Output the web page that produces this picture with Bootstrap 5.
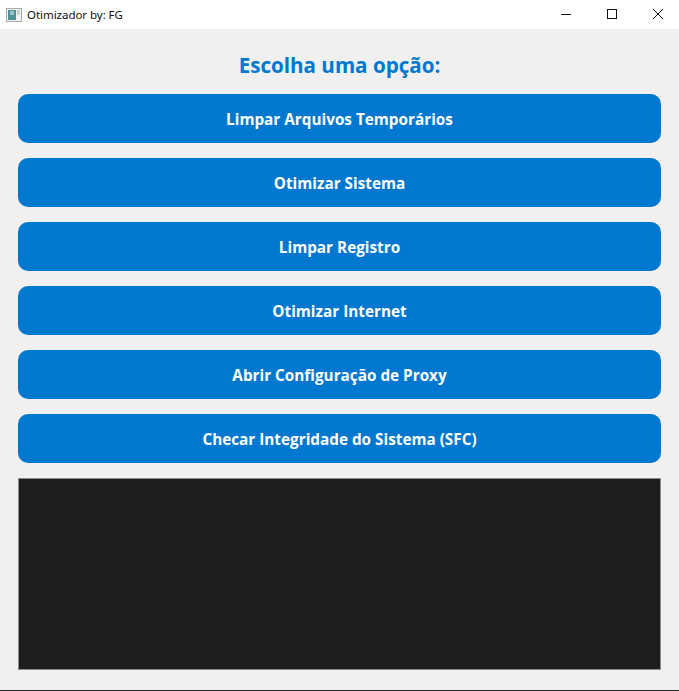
<!DOCTYPE html>
<html lang="pt"><head><meta charset="utf-8"><title>Otimizador by: FG</title>
<link href="https://cdn.jsdelivr.net/npm/bootstrap@5.3.0/dist/css/bootstrap.min.css" rel="stylesheet">
<style>
html,body{height:691px;overflow:hidden}
body{background:#f0f0f0;font-family:"Open Sans","Noto Sans",sans-serif}
.winbar{height:29px;background:#fff;padding-left:6px;margin-right:-2px}
.wintitle{font-family:"Noto Sans",sans-serif;font-size:11.5px;color:#111;margin-left:5px;padding-top:1px}
.wintitle{letter-spacing:-.04px}
.winbtn{width:46px;height:27px;margin-bottom:2px}
.shell{height:662px;padding:0 18px;border-bottom:1px solid #222}
.heading{color:#0078cf;font-size:20.6px;font-weight:700;line-height:27px;margin:23px 0 15px;text-align:center}
.actionbtn{height:49px;border:0;border-radius:10px;background:#0078cf;color:#fff;font-size:15.3px;font-weight:700;margin-bottom:15px;padding:2px 0 0;width:100%}
.actionbtn:hover{background:#0078cf;color:#fff}
.outbox{height:192px;background:#1e1e1e;border:1px solid #8a8a8a}
</style></head><body>
<div class="winbar d-flex align-items-center">
<svg width="16" height="14" viewBox="0 0 16 14"><rect x=".5" y=".5" width="15" height="13" fill="#f2f2f2" stroke="#a9a9a9"/><rect x="2" y="2" width="8" height="10" fill="#4f8f96"/><rect x="4" y="3" width="4" height="4" fill="#9cc4c4"/><rect x="11" y="2" width="3" height="5" fill="#c9d2d4"/></svg>
<span class="wintitle flex-grow-1">Otimizador by: FG</span>
<div class="winbtn d-flex align-items-center justify-content-center"><svg width="12" height="12" viewBox="0 0 12 12"><path d="M1 6.5H11" stroke="#111" fill="none"/></svg></div>
<div class="winbtn d-flex align-items-center justify-content-center"><svg width="12" height="12" viewBox="0 0 12 12"><rect x="1.5" y="1.5" width="9" height="9" stroke="#111" fill="none"/></svg></div>
<div class="winbtn d-flex align-items-center justify-content-center"><svg width="12" height="12" viewBox="0 0 12 12"><path d="M1 1L11 11M11 1L1 11" stroke="#111" fill="none"/></svg></div>
</div>
<div class="shell d-flex flex-column">
<h1 class="heading">Escolha uma opção:</h1>
<button class="btn actionbtn">Limpar Arquivos Temporários</button>
<button class="btn actionbtn">Otimizar Sistema</button>
<button class="btn actionbtn">Limpar Registro</button>
<button class="btn actionbtn">Otimizar Internet</button>
<button class="btn actionbtn">Abrir Configuração de Proxy</button>
<button class="btn actionbtn">Checar Integridade do Sistema (SFC)</button>
<div class="outbox"></div>
</div>
<script src="https://cdn.jsdelivr.net/npm/bootstrap@5.3.0/dist/js/bootstrap.bundle.min.js"></script>
</body></html>
